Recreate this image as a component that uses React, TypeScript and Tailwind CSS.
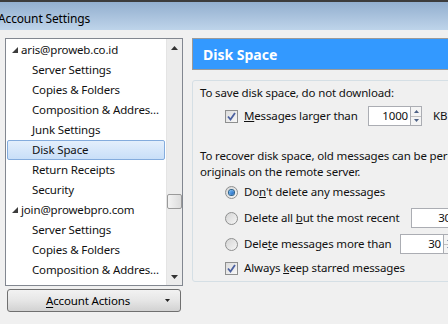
import React from 'react'

const font = { fontFamily: '"Noto Sans", "Open Sans", sans-serif' }

function TreeRow({ label, level, selected }: { label: string; level: number; selected?: boolean }) {
    return (
        <div
            className={`h-5 flex items-center whitespace-nowrap mx-[1px] border ${selected ? 'rounded-[2px] border-[#84acdd] bg-gradient-to-b from-[#e4effc] to-[#c9dff8]' : 'border-transparent'}`}
        >
            {level === 0 ? (
                <>
                    <span className="w-[13px] flex justify-end pr-[3px]">
                        <svg width="6" height="6" viewBox="0 0 6 6"><path d="M6 0 L6 6 L0 6 Z" fill="#3c3c3c" /></svg>
                    </span>
                    <span>{label}</span>
                </>
            ) : (
                <span className="pl-[24px]">{label}</span>
            )}
        </div>
    )
}

function Checkbox() {
    return (
        <span className="w-[13px] h-[13px] border border-[#8e8f8f] bg-gradient-to-br from-[#dcdcdc] to-[#f8f8f8] flex items-center justify-center shrink-0">
            <svg width="9" height="9" viewBox="0 0 9 9">
                <path d="M1 4.5 L3.5 7.5 L8 1" fill="none" stroke="#4c61a0" strokeWidth="1.8" />
            </svg>
        </span>
    )
}

function Radio({ checked }: { checked?: boolean }) {
    return (
        <span className="w-[13px] h-[13px] rounded-full border border-[#8e8f8f] bg-gradient-to-br from-[#d4d4d4] to-[#f6f6f6] flex items-center justify-center shrink-0">
            {checked && <span className="w-[5px] h-[5px] rounded-full bg-gradient-to-br from-[#7ac1ff] to-[#1861b8] ring-1 ring-[#2c628b]" />}
        </span>
    )
}

function Spinner({ value, width }: { value: string; width: string }) {
    return (
        <div className="flex items-stretch h-5 shrink-0">
            <div className={`${width} bg-white border border-[#abadb3] flex items-center justify-end pr-[2px]`}>{value}</div>
            <div className="w-[11px] flex flex-col border border-l-0 border-[#abadb3] bg-[#f4f4f4]">
                <div className="flex-1 flex items-center justify-center border-b border-[#c0c0c0]">
                    <svg width="5" height="3" viewBox="0 0 5 3"><path d="M0 3 L2.5 0 L5 3 Z" fill="#4d6185" /></svg>
                </div>
                <div className="flex-1 flex items-center justify-center">
                    <svg width="5" height="3" viewBox="0 0 5 3"><path d="M0 0 L2.5 3 L5 0 Z" fill="#4d6185" /></svg>
                </div>
            </div>
        </div>
    )
}

export default function App() {
    const tree = [
        { label: 'aris@proweb.co.id', level: 0 },
        { label: 'Server Settings', level: 1 },
        { label: 'Copies & Folders', level: 1 },
        { label: 'Composition & Addres...', level: 1 },
        { label: 'Junk Settings', level: 1 },
        { label: 'Disk Space', level: 1, selected: true },
        { label: 'Return Receipts', level: 1 },
        { label: 'Security', level: 1 },
        { label: 'join@prowebpro.com', level: 0 },
        { label: 'Server Settings', level: 1 },
        { label: 'Copies & Folders', level: 1 },
        { label: 'Composition & Addres...', level: 1 },
        { label: 'Junk Settings', level: 1 },
    ]

    return (
        <div className="w-[448px] h-[324px] overflow-hidden bg-[#f0f0f0] text-[#111] text-[11.5px] tracking-[-0.15px]" style={font}>
            <div className="h-[30px] border-t-2 border-[#3c3c3c] bg-gradient-to-b from-[#93afcf] to-[#bed4ea] flex items-center pt-[5px]">
                <span className="ml-[-2px] text-[12px] text-black">Account Settings</span>
            </div>

            <div className="flex pt-2">
                <div className="ml-[5px] w-[178px] shrink-0 flex flex-col">
                    <div className="h-[248px] border border-[#828790] bg-white flex overflow-hidden">
                        <div className="flex-1 pt-[1px] overflow-hidden">
                            {tree.map((item, i) => (
                                <TreeRow key={i} label={item.label} level={item.level} selected={item.selected} />
                            ))}
                        </div>
                        <div className="w-[16px] bg-[#ececec] border-l border-[#e4e4e4] flex flex-col items-center">
                            <div className="h-[17px] flex items-center justify-center">
                                <svg width="7" height="4" viewBox="0 0 7 4"><path d="M0 4 L3.5 0 L7 4 Z" fill="#333" /></svg>
                            </div>
                            <div className="h-[138px]" />
                            <div className="w-[15px] h-[15px] rounded-[2px] border border-[#9a9a9a] bg-gradient-to-r from-[#f3f3f3] to-[#dcdcdc]" />
                            <div className="flex-1" />
                            <div className="h-[17px] flex items-center justify-center">
                                <svg width="7" height="4" viewBox="0 0 7 4"><path d="M0 0 L3.5 4 L7 0 Z" fill="#333" /></svg>
                            </div>
                        </div>
                    </div>
                    <div className="mt-[3px] ml-[2px] w-[174px] h-[23px] rounded-[3px] border border-[#707070] bg-gradient-to-b from-[#f2f2f2] via-[#e6e6e6] to-[#d2d2d2] flex items-center relative">
                        <span className="flex-1 text-center text-black pr-[12px]">
                            <span className="underline underline-offset-2">A</span>ccount Actions
                        </span>
                        <svg className="absolute right-[10px] top-[9px]" width="5" height="3" viewBox="0 0 5 3"><path d="M0 0 L2.5 3 L5 0 Z" fill="#222" /></svg>
                    </div>
                </div>

                <div className="ml-[9px] w-[300px] shrink-0 flex flex-col">
                    <div className="h-[32px] border border-[#9a9a9a] bg-[#3399ff] flex items-center pl-[10px]">
                        <span className="text-[14px] font-bold text-white tracking-normal">Disk Space</span>
                    </div>
                    <div className="mt-[10px] h-[202px] rounded-[3px] border border-[#d5dfe5] bg-[#f0f0f0] pl-[7px] whitespace-nowrap">
                        <div className="h-[20px] flex items-end">To save disk space, do not download:</div>
                        <div className="mt-[5px] h-5 flex items-center pl-[25px]">
                            <Checkbox />
                            <span className="ml-[6px] w-[124px]"><span className="underline">M</span>essages larger than</span>
                            <Spinner value="1000" width="w-[43px]" />
                            <span className="ml-[11px]">KB</span>
                        </div>
                        <div className="mt-[22px] leading-[16px]">
                            <div>To recover disk space, old messages can be permanently deleted, both local copies and</div>
                            <div>originals on the remote server.</div>
                        </div>
                        <div className="mt-[1px] h-[22px] flex items-center pl-[25px]">
                            <Radio checked />
                            <span className="ml-[6px]">Do<span className="underline">n</span>'t delete any messages</span>
                        </div>
                        <div className="mt-[5px] h-5 flex items-center pl-[25px]">
                            <Radio />
                            <span className="ml-[6px] w-[167px]">Delete all <span className="underline">b</span>ut the most recent</span>
                            <Spinner value="30" width="w-[43px]" />
                        </div>
                        <div className="mt-[6px] h-5 flex items-center pl-[25px]">
                            <Radio />
                            <span className="ml-[6px] w-[156px]">Dele<span className="underline">t</span>e messages more than</span>
                            <Spinner value="30" width="w-[44px]" />
                        </div>
                        <div className="mt-[4px] h-5 flex items-center pl-[25px]">
                            <Checkbox />
                            <span className="ml-[6px]">Always <span className="underline">k</span>eep starred messages</span>
                        </div>
                    </div>
                </div>
            </div>
        </div>
    )
}
